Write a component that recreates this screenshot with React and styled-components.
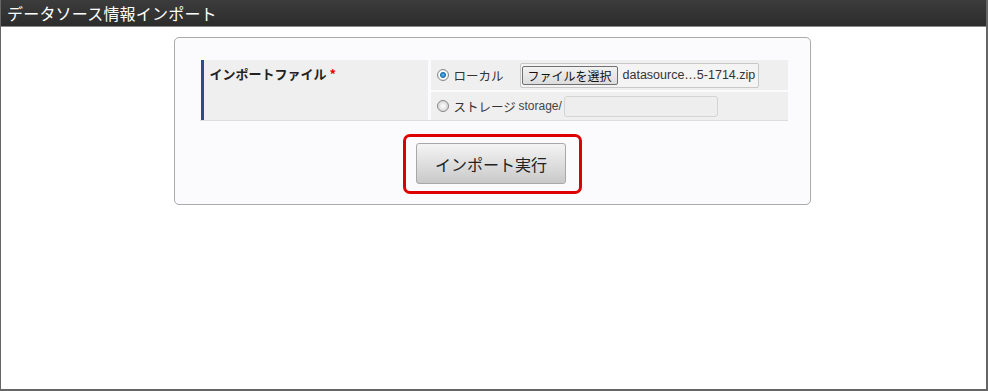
import React from "react";
import styled, { createGlobalStyle } from "styled-components";

const GlobalStyle = createGlobalStyle`
  html, body {
    margin: 0;
    padding: 0;
    background: #ffffff;
  }
  body {
    font-family: "Liberation Sans", Arial, "Noto Sans CJK JP", sans-serif;
    font-size: 12px;
    color: #333;
  }
`;

const Frame = styled.div`
  width: 988px;
  height: 391px;
  box-sizing: border-box;
  border: 1px solid #666;
  border-top: none;
  border-right-width: 2px;
  border-bottom-width: 2px;
  background: #fff;
  display: flex;
  flex-direction: column;
`;

const TitleBar = styled.div`
  height: 27px;
  flex-shrink: 0;
  background: linear-gradient(#3c3c3c, #2c2c2c);
  border-bottom: 1px solid #8a8a8a;
  box-sizing: border-box;
  color: #fff;
  font-size: 16px;
  line-height: 26px;
  padding-left: 6px;
  font-family: "Noto Sans CJK JP", sans-serif;
  letter-spacing: 0.2px;
`;

const Body = styled.div`
  display: flex;
  justify-content: center;
  padding: 10px 0 0 0;
  margin-left: -2px;
`;

const Panel = styled.div`
  width: 637px;
  box-sizing: border-box;
  border: 1px solid #aaa;
  border-radius: 5px;
  background: #fbfbfe;
  padding: 22px 22px 10px 24px;
  display: flex;
  flex-direction: column;
  align-items: center;
  gap: 13px;
`;

const Table = styled.div`
  width: 588px;
  display: grid;
  grid-template-columns: 228px 1fr;
  column-gap: 3px;
  border-bottom: 1px solid #ddd;
`;

const LabelCell = styled.div`
  background: #efefef;
  border-left: 3px solid #2e4a8a;
  margin-left: 1px;
  padding: 4px 6px;
  font-weight: bold;
  font-size: 13px;
  color: #222;
  font-family: "Noto Sans CJK JP", sans-serif;
`;

const Required = styled.span`
  color: #e00;
  margin-left: 3px;
  font-weight: bold;
`;

const ValueCol = styled.div`
  display: flex;
  flex-direction: column;
  gap: 2px;
`;

const ValueRow = styled.div`
  background: #efefef;
  height: ${({ $h }) => $h}px;
  display: flex;
  align-items: center;
  padding-left: 6px;
  font-size: 13px;
  color: #333;
`;

const Radio = styled.span`
  width: 10px;
  height: 10px;
  border-radius: 50%;
  border: 1px solid #888;
  background: ${({ $on }) =>
    $on
      ? "radial-gradient(circle, #5fc0f0 0, #1f6fb0 2.5px, #fff 3.5px, #e8e8e8 5px)"
      : "radial-gradient(circle, #ffffff 0, #d8d8d8 5px)"};
  flex-shrink: 0;
`;

const OptionText = styled.span`
  font-family: "Noto Sans CJK JP", sans-serif;
  font-size: 12.5px;
  margin-left: 5px;
  width: ${({ $w }) => $w}px;
  color: #333;
`;

const FileBox = styled.div`
  display: flex;
  align-items: center;
  height: 21px;
  border: 1px solid #c8c8c8;
  border-radius: 2px;
  background: #f4f4f4;
  padding: 1px;
`;

const FileButton = styled.span`
  height: 19px;
  box-sizing: border-box;
  border: 1px solid #707070;
  border-radius: 2px;
  background: linear-gradient(#f2f2f2, #dcdcdc);
  padding: 0 5px;
  font-family: "Noto Sans CJK JP", sans-serif;
  font-size: 12px;
  line-height: 17px;
  color: #111;
`;

const FileName = styled.span`
  padding: 0 2px 0 5px;
  font-size: 12.5px;
  color: #333;
`;

const Prefix = styled.span`
  font-size: 12px;
  color: #444;
  margin-right: 2px;
`;

const TextInput = styled.div`
  width: 154px;
  height: 21px;
  box-sizing: border-box;
  border: 1px solid #d4d4d4;
  border-radius: 3px;
  background: #eeeeee;
`;

const FocusRing = styled.div`
  border: 3px solid #dd0000;
  border-radius: 7px;
  padding: 6px 13px 7px 10px;
  margin-right: 2px;
`;

const Button = styled.button`
  width: 150px;
  height: 41px;
  border: 1px solid #a8a8a8;
  border-radius: 3px;
  background: linear-gradient(#f4f4f4, #c9c9c9);
  font-family: "Noto Sans CJK JP", sans-serif;
  font-size: 16px;
  color: #222;
  display: block;
`;

export default function App() {
  return (
    <>
      <GlobalStyle />
      <Frame>
        <TitleBar>データソース情報インポート</TitleBar>
        <Body>
          <Panel>
            <Table>
              <LabelCell>
                インポートファイル<Required>*</Required>
              </LabelCell>
              <ValueCol>
                <ValueRow $h={30}>
                  <Radio $on />
                  <OptionText $w={66}>ローカル</OptionText>
                  <FileBox>
                    <FileButton>ファイルを選択</FileButton>
                    <FileName>datasource…5-1714.zip</FileName>
                  </FileBox>
                </ValueRow>
                <ValueRow $h={28}>
                  <Radio />
                  <OptionText $w={65}>ストレージ</OptionText>
                  <Prefix>storage/</Prefix>
                  <TextInput />
                </ValueRow>
              </ValueCol>
            </Table>
            <FocusRing>
              <Button>インポート実行</Button>
            </FocusRing>
          </Panel>
        </Body>
      </Frame>
    </>
  );
}
